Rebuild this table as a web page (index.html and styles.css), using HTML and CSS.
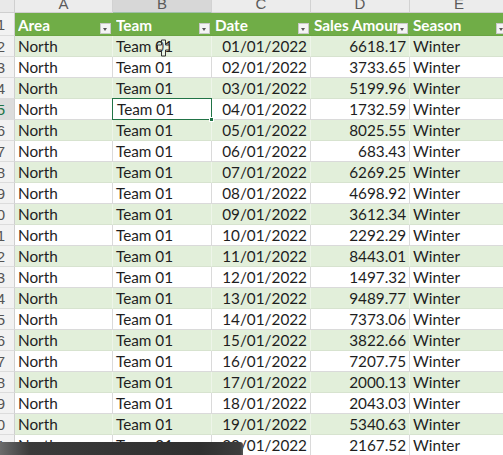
FILE: index.html
```html
<!DOCTYPE html>
<html>
<head>
<meta charset="utf-8">
<link rel="stylesheet" href="styles.css">
</head>
<body>
<div class="viewport">
  <div class="sheet" id="sheet">
    <div class="corner"></div>
    <div class="colhead">A</div>
    <div class="colhead sel">B</div>
    <div class="colhead">C</div>
    <div class="colhead">D</div>
    <div class="colhead">E</div>

    <div class="rowhead">1</div>
    <div class="th"><span class="lbl">Area</span><span class="fbtn"></span></div>
    <div class="th"><span class="lbl">Team</span><span class="fbtn"></span></div>
    <div class="th"><span class="lbl">Date</span><span class="fbtn"></span></div>
    <div class="th"><span class="lbl">Sales Amount</span><span class="fbtn"></span></div>
    <div class="th"><span class="lbl">Season</span><span class="fbtn"></span></div>
  </div>
  <div class="playbar"></div>
</div>
<script>
  const data = [
    ["01/01/2022","6618.17"],["02/01/2022","3733.65"],["03/01/2022","5199.96"],["04/01/2022","1732.59"],
    ["05/01/2022","8025.55"],["06/01/2022","683.43"],["07/01/2022","6269.25"],["08/01/2022","4698.92"],
    ["09/01/2022","3612.34"],["10/01/2022","2292.29"],["11/01/2022","8443.01"],["12/01/2022","1497.32"],
    ["13/01/2022","9489.77"],["14/01/2022","7373.06"],["15/01/2022","3822.66"],["16/01/2022","7207.75"],
    ["17/01/2022","2000.13"],["18/01/2022","2043.03"],["19/01/2022","5340.63"],["20/01/2022","2167.52"]
  ];
  const sheet = document.getElementById('sheet');
  data.forEach((d, i) => {
    const r = i + 2;
    const band = (r % 2 === 0) ? ' band' : '';
    const selRow = r === 5;
    let html = '<div class="rowhead' + (selRow ? ' sel' : '') + '">' + r + '</div>';
    html += '<div class="td' + band + '">North</div>';
    let extra = '';
    if (r === 2) extra = '<svg class="cursor" width="14" height="18" viewBox="0 0 14 18"><path d="M4.5 1h4v5h4v5h-4v6h-4v-6h-4V6h4z" fill="rgba(255,255,255,0.25)" stroke="#333" stroke-width="1"/></svg>';
    html += '<div class="td' + band + (selRow ? ' active' : '') + '">Team 01' + extra + '</div>';
    html += '<div class="td num' + band + '">' + d[0] + '</div>';
    html += '<div class="td num' + band + '">' + d[1] + '</div>';
    html += '<div class="td' + band + '">Winter</div>';
    sheet.insertAdjacentHTML('beforeend', html);
  });
</script>
</body>
</html>
```

FILE: styles.css
```css
html, body {
  margin: 0;
  padding: 0;
  background: #ffffff;
}
.viewport {
  position: relative;
  width: 503px;
  height: 455px;
  overflow: hidden;
}
.sheet {
  display: grid;
  grid-template-columns: 32px 98px 99px 99px 99px 99px;
  grid-template-rows: 20px 23px;
  grid-auto-rows: 21px;
  margin: -7px 0 0 -17px;
  font-family: Lato, "Liberation Sans", sans-serif;
  font-size: 15.3px;
  color: #1e1e1e;
}
.corner {
  background: #e9e9e9;
  border-right: 1px solid #cfcfcf;
  border-bottom: 1px solid #cfcfcf;
}
.colhead {
  background: #ececec;
  border-right: 1px solid #d2d2d2;
  border-bottom: 1px solid #cfcfcf;
  color: #5a5a5a;
  font-family: "Liberation Sans", sans-serif;
  font-size: 15px;
  display: flex;
  align-items: flex-end;
  justify-content: center;
  line-height: 1;
  padding-bottom: 1px;
  box-sizing: border-box;
}
.colhead.sel {
  background: #d7d7d7;
  border-bottom: 1px solid #9fbfa9;
}
.rowhead {
  background: #f2f2f2;
  border-right: 1px solid #cfcfcf;
  border-bottom: 1px solid #dcdcdc;
  color: #555;
  font-family: "Liberation Sans", sans-serif;
  font-size: 15px;
  display: flex;
  align-items: center;
  justify-content: flex-end;
  padding-right: 9px;
  box-sizing: border-box;
}
.rowhead.sel {
  background: #dcdcdc;
  color: #217346;
}
.th {
  background: #70ad47;
  color: #fff;
  font-weight: bold;
  display: flex;
  align-items: center;
  padding-left: 3px;
  padding-right: 2px;
  box-sizing: border-box;
  border-bottom: 1px solid #6aa443;
}
.th .lbl {
  flex: 1;
  min-width: 0;
  overflow: hidden;
  white-space: nowrap;
  padding-top: 1px;
}
.fbtn {
  flex: none;
  width: 11px;
  height: 11px;
  margin-top: 9px;
  background: #f4f4f4;
  border: 1px solid #c9c9c9;
  box-sizing: border-box;
  position: relative;
}
.fbtn::after {
  content: "";
  position: absolute;
  left: 2px;
  top: 4px;
  border-left: 2.5px solid transparent;
  border-right: 2.5px solid transparent;
  border-top: 3px solid #555;
}
.td {
  position: relative;
  display: flex;
  align-items: center;
  padding-left: 3px;
  padding-right: 3px;
  box-sizing: border-box;
  border-right: 1px solid #dadada;
  border-bottom: 1px solid #dadada;
  white-space: nowrap;
  background: #fff;
}
.td.band {
  background: #e2efda;
  border-right-color: #eef5e9;
  border-bottom-color: #d7e3cf;
}
.td.num {
  justify-content: flex-end;
}
.td.active {
  z-index: 1;
  border: 1px solid #217346;
  margin: -1px 0 0 -1px;
  padding-left: 4px;
}
.td.active::after {
  content: "";
  position: absolute;
  right: -3px;
  bottom: -3px;
  width: 5px;
  height: 5px;
  background: #217346;
  border: 1px solid #fff;
  box-sizing: border-box;
}
.cursor {
  position: absolute;
  left: 44px;
  top: 3px;
}
.playbar {
  position: absolute;
  left: 0;
  top: 442px;
  width: 243px;
  height: 13px;
  border-top-right-radius: 3px;
  background: linear-gradient(90deg, #6b6b6b 0px, #3a3a3a 30px, #2f2f2f 200px, #3c3c3c 240px, #555 243px);
}
```
